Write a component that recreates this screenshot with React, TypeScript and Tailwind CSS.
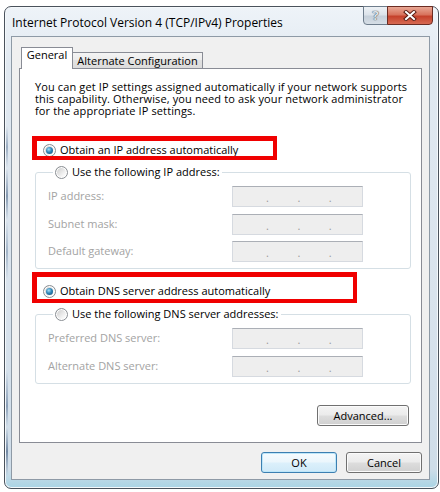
import React from "react";

type RadioProps = { checked?: boolean; label: string };

const Radio = ({ checked = false }: { checked?: boolean }) => (
  <span className="flex h-[13px] w-[13px] shrink-0 items-center justify-center rounded-full border border-[#8a8e93] bg-[linear-gradient(135deg,#c8c8c8,#f6f6f6_70%)] shadow-[inset_0_0_0_1px_#ffffff]">
    {checked && (
      <span className="h-[7px] w-[7px] rounded-full bg-[radial-gradient(circle_at_40%_35%,#a6e0f8_0%,#2f86b8_45%,#0f4a75_100%)]" />
    )}
  </span>
);

const RadioRow = ({ checked, label }: RadioProps) => (
  <div className="flex h-[14px] items-center gap-[4px]">
    <Radio checked={checked} />
    <span className="leading-[14px] text-black">{label}</span>
  </div>
);

const IpBox = () => (
  <div className="flex h-[21px] w-[131px] items-end gap-[28.5px] border border-[#d6dae0] border-t-[#abafb6] bg-[#eeeeee] pb-[3px] pl-[33px] leading-none text-[#9a9a9a]">
    <span>.</span>
    <span>.</span>
    <span>.</span>
  </div>
);

const Field = ({ label }: { label: string }) => (
  <div className="flex items-center justify-between">
    <span className="text-[#a3a3a3]">{label}</span>
    <IpBox />
  </div>
);

const Button = ({ label, primary = false, width }: { label: string; primary?: boolean; width: string }) => (
  <div
    className={`flex h-[21px] items-center justify-center rounded-[3px] border leading-none text-black ${width} ${
      primary
        ? "border-[#3c7fb1] bg-[linear-gradient(180deg,#f6fbfe_0%,#ebf6fc_48%,#dcf0fb_52%,#cfe9f8_100%)] shadow-[inset_0_0_0_1px_#bde6f9]"
        : "border-[#707070] bg-[linear-gradient(180deg,#f4f4f4_0%,#ebebeb_48%,#dddddd_52%,#d0d0d0_100%)] shadow-[inset_0_0_0_1px_#fbfbfb]"
    }`}
  >
    {label}
  </div>
);

const intro = [
  "You can get IP settings assigned automatically if your network supports",
  "this capability. Otherwise, you need to ask your network administrator",
  "for the appropriate IP settings.",
];

export default function App() {
  return (
    <div className="h-[492px] w-[440px] overflow-hidden bg-white pl-[4px] pt-[6px] font-['Open_Sans',sans-serif] text-[11px]">
      <div className="flex h-[483px] w-[435px] flex-col rounded-[7px] border border-[#4a525c] bg-[linear-gradient(180deg,#eef3f8_0%,#e1e9f1_12%,#d9e3ed_60%,#cfdde9_96%,#a9d4e4_100%)] shadow-[inset_0_0_0_1px_#f4f8fb]">
        {/* title bar */}
        <div className="flex h-[29px] items-start justify-between">
          <span className="pl-[7px] pt-[8px] text-[12px] leading-[16px] text-black">
            Internet Protocol Version 4 (TCP/IPv4) Properties
          </span>
          <div className="-mt-px mr-[5px] flex">
            <div className="flex h-[19px] w-[25px] items-center justify-center rounded-bl-[4px] border border-[#6e7d8c] bg-[linear-gradient(180deg,#eef2f6_0%,#dce3ea_45%,#c6d0da_55%,#d6dee6_100%)] text-[13px] font-bold leading-none text-[#dfe4ea] [text-shadow:0_0_1px_#3c4650,0_0_1px_#3c4650]">
              ?
            </div>
            <div className="-ml-px flex h-[19px] w-[46px] items-center justify-center rounded-br-[4px] border border-[#6b2c22] bg-[linear-gradient(180deg,#e9a895_0%,#d8735d_45%,#c5412b_55%,#d76a52_100%)]">
              <svg width="14" height="11" viewBox="0 0 14 11">
                <path d="M3 2 L11 9 M11 2 L3 9" stroke="#5a1d14" strokeWidth="4" strokeLinecap="square" />
                <path d="M3 2 L11 9 M11 2 L3 9" stroke="#ffffff" strokeWidth="2" strokeLinecap="square" />
              </svg>
            </div>
          </div>
        </div>

        <div className="flex">
          {/* glass streaks on the left frame */}
          <div className="ml-[1px] mr-[3px] mt-[90px] h-[350px] w-[2px] bg-[linear-gradient(180deg,transparent_0%,#7d93ad_6%,transparent_12%,#5f7896_20%,transparent_27%,#8aa0b8_36%,transparent_44%,transparent_70%,#6c84a2_80%,transparent_86%,#4d6788_93%,transparent_100%)] opacity-70" />

          {/* client area */}
          <div className="mr-[7px] flex h-[444px] w-[419px] flex-col border border-[#8e9aa6] bg-[#f0f0f0] pt-[10px]">
            {/* tabs */}
            <div className="flex h-[21px] items-end pl-[9px]">
              <div className="relative z-10 -mb-px flex h-[22px] w-[52px] justify-center border border-b-0 border-[#898c95] bg-white leading-[14px] text-black">
                General
              </div>
              <div className="flex h-[16px] w-[130px] items-center justify-center border border-b-0 border-l-0 border-[#898c95] bg-[linear-gradient(180deg,#f4f4f4_0%,#ececec_50%,#e1e1e1_50%,#dcdcdc_100%)] leading-none text-black">
                Alternate Configuration
              </div>
            </div>

            {/* panel */}
            <div className="relative mx-[7px] flex h-[375px] flex-col border border-[#898c95] bg-white pt-[12px]">
              <div className="pl-[15px] tracking-[0.12px] text-black">
                {intro.map((line) => (
                  <div key={line} className="h-[12px] leading-[12px]">
                    {line}
                  </div>
                ))}
              </div>

              <div className="mt-[26px] pl-[23px]">
                <RadioRow checked label="Obtain an IP address automatically" />
              </div>

              <fieldset className="ml-[15px] mt-[8px] w-[376px] rounded-[3px] border border-[#d5dfe5] pb-[6px] pl-[12px] pr-[47px]">
                <legend className="ml-[5px] px-[2px]">
                  <RadioRow label="Use the following IP address:" />
                </legend>
                <div className="flex flex-col gap-[6.5px] pt-[7px]">
                  <Field label="IP address:" />
                  <Field label="Subnet mask:" />
                  <Field label="Default gateway:" />
                </div>
              </fieldset>

              <div className="mt-[15px] pl-[23px]">
                <RadioRow checked label="Obtain DNS server address automatically" />
              </div>

              <fieldset className="ml-[15px] mt-[9px] w-[376px] rounded-[3px] border border-[#d5dfe5] pb-[6px] pl-[12px] pr-[47px]">
                <legend className="ml-[5px] px-[2px]">
                  <RadioRow label="Use the following DNS server addresses:" />
                </legend>
                <div className="flex flex-col gap-[7px] pt-[7px]">
                  <Field label="Preferred DNS server:" />
                  <Field label="Alternate DNS server:" />
                </div>
              </fieldset>

              <div className="mt-[21px] flex justify-end pr-[12px]">
                <Button label="Advanced..." width="w-[92px]" />
              </div>

              {/* red annotation boxes */}
              <div className="absolute left-[12px] top-[67px] h-[24px] w-[245px] border-[4px] border-l-[5px] border-t-[5px] border-[#f00000]" />
              <div className="absolute left-[12px] top-[203px] h-[31px] w-[325px] border-[4px] border-l-[5px] border-t-[5px] border-[#f00000]" />
            </div>

            {/* dialog buttons */}
            <div className="mt-[9px] flex justify-end gap-[9px] pr-[7px]">
              <Button label="OK" primary width="w-[76px]" />
              <Button label="Cancel" width="w-[76px]" />
            </div>
          </div>
        </div>
      </div>
    </div>
  );
}
